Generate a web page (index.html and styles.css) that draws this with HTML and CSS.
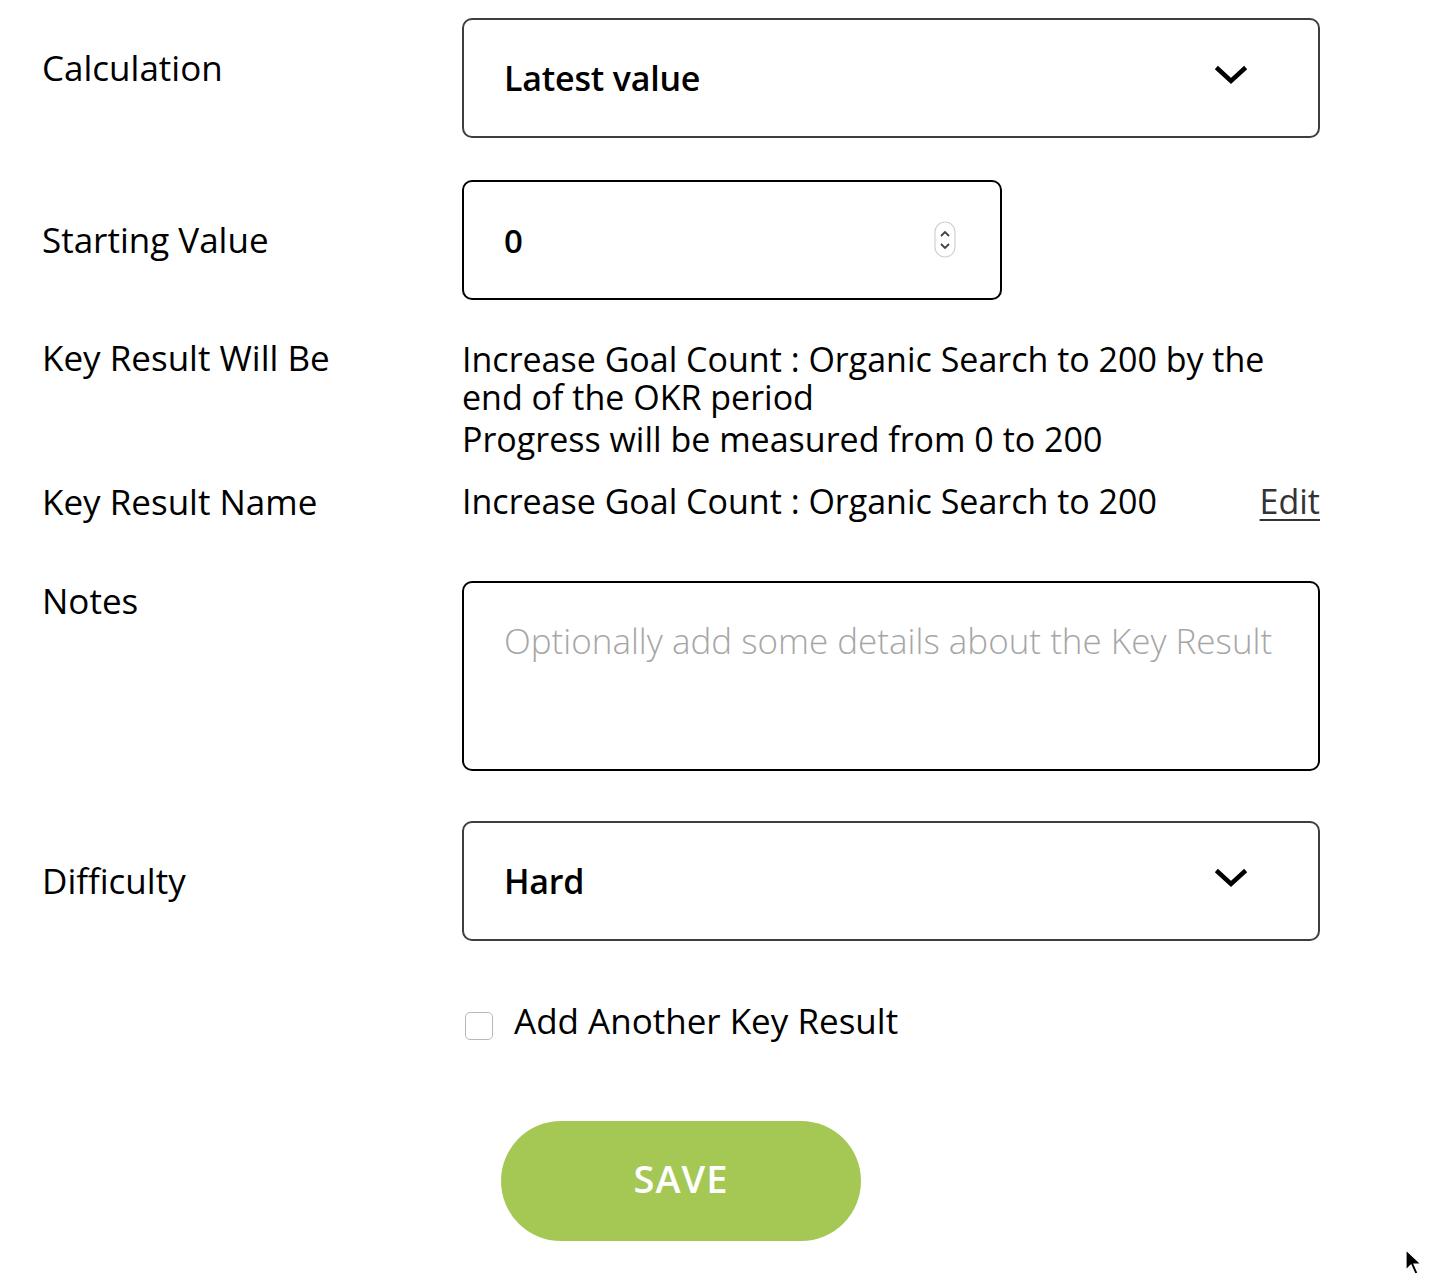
FILE: index.html
```html
<!DOCTYPE html>
<html>
<head>
<meta charset="utf-8">
<link rel="stylesheet" href="styles.css">
</head>
<body>
<form class="form">
  <div class="row row-calc">
    <div class="label">Calculation</div>
    <div class="field">
      <div class="select">
        <span class="select-text">Latest value</span>
        <svg class="chev" width="34" height="22" viewBox="0 0 34 22"><path d="M4 5 L17 17 L30 5" fill="none" stroke="#000" stroke-width="4.5" stroke-linecap="square"/></svg>
      </div>
    </div>
  </div>

  <div class="row row-start">
    <div class="label">Starting Value</div>
    <div class="field">
      <div class="number">
        <span class="number-text">0</span>
        <svg class="spin" width="22" height="37" viewBox="0 0 22 37"><rect x="1" y="1" width="20" height="35" rx="10" fill="#fff" stroke="#d0d0d0" stroke-width="1.2"/><path d="M7 15 L11 11 L15 15" fill="none" stroke="#444" stroke-width="1.8"/><path d="M7 23 L11 27 L15 23" fill="none" stroke="#444" stroke-width="1.8"/></svg>
      </div>
    </div>
  </div>

  <div class="row row-will">
    <div class="label">Key Result Will Be</div>
    <div class="field text">
      <div class="will-line">Increase Goal Count : Organic Search to 200 by the end of the OKR period</div>
      <div class="will-progress">Progress will be measured from 0 to 200</div>
    </div>
  </div>

  <div class="row row-name">
    <div class="label">Key Result Name</div>
    <div class="field text name-field">
      <span>Increase Goal Count : Organic Search to 200</span>
      <a class="edit">Edit</a>
    </div>
  </div>

  <div class="row row-notes">
    <div class="label">Notes</div>
    <div class="field">
      <textarea class="notes" placeholder="Optionally add some details about the Key Result"></textarea>
    </div>
  </div>

  <div class="row row-diff">
    <div class="label">Difficulty</div>
    <div class="field">
      <div class="select">
        <span class="select-text">Hard</span>
        <svg class="chev" width="34" height="22" viewBox="0 0 34 22"><path d="M4 5 L17 17 L30 5" fill="none" stroke="#000" stroke-width="4.5" stroke-linecap="square"/></svg>
      </div>
    </div>
  </div>

  <div class="row row-check">
    <div class="label"></div>
    <div class="field check-field">
      <span class="checkbox"></span>
      <span class="check-label">Add Another Key Result</span>
    </div>
  </div>

  <div class="row row-save">
    <div class="label"></div>
    <div class="field">
      <button type="button" class="save">SAVE</button>
    </div>
  </div>
</form>
<svg class="cursor" width="20" height="28" viewBox="0 0 20 28"><path d="M1 1 L1 21 L6 16 L10 25 L13 24 L9 15 L16 15 Z" fill="#000" stroke="#fff" stroke-width="1.2"/></svg>
</body>
</html>
```

FILE: styles.css
```css
html, body {
  margin: 0;
  padding: 0;
  background: #fff;
}
body {
  font-family: "Open Sans", "DejaVu Sans", sans-serif;
  color: #000;
  width: 1430px;
  height: 1274px;
  overflow: hidden;
  position: relative;
}
.form {
  padding: 18px 0 0 42px;
  display: flex;
  flex-direction: column;
}
.row {
  display: flex;
  align-items: flex-start;
}
.label {
  width: 420px;
  flex: none;
  font-size: 35px;
  line-height: 40px;
}
.field {
  width: 858px;
  flex: none;
}
.select {
  box-sizing: border-box;
  height: 120px;
  border: 2px solid #3e3e3e;
  border-radius: 10px;
  display: flex;
  align-items: center;
  justify-content: space-between;
  padding: 0 70px 0 40px;
}
.select-text {
  font-size: 34px;
  font-weight: 600;
  letter-spacing: -0.2px;
}
.chev {
  margin-top: -6px;
}
.row-calc .label {
  padding-top: 30px;
}
.row-start {
  margin-top: 42px;
}
.row-start .label {
  padding-top: 40px;
}
.number {
  box-sizing: border-box;
  width: 540px;
  height: 120px;
  border: 2px solid #000;
  border-radius: 10px;
  display: flex;
  align-items: center;
  justify-content: space-between;
  padding: 0 44px 0 40px;
}
.number-text {
  font-size: 33px;
  font-weight: 600;
}
.spin {
  margin-top: -2px;
}
.row-will {
  margin-top: 38px;
}
.text {
  font-size: 34px;
  line-height: 38px;
}
.will-line {
  max-width: 830px;
  padding-top: 2px;
}
.will-progress {
  margin-top: 4px;
}
.row-name {
  margin-top: 24px;
}
.name-field {
  display: flex;
  justify-content: space-between;
}
.edit {
  color: #333;
  text-decoration: underline;
  text-underline-offset: 5px;
  text-decoration-thickness: 2px;
}
.row-notes {
  margin-top: 59px;
}
.notes {
  display: block;
  box-sizing: border-box;
  width: 858px;
  height: 190px;
  border: 2px solid #000;
  border-radius: 10px;
  padding: 34px 40px;
  font-family: "Open Sans", "DejaVu Sans", sans-serif;
  font-size: 35px;
  font-weight: 300;
  resize: none;
  outline: none;
  margin: 0;
}
.notes::placeholder {
  color: #a6a6a6;
}
.row-diff {
  margin-top: 50px;
}
.row-diff .label {
  padding-top: 40px;
}
.row-check {
  margin-top: 60px;
}
.check-field {
  display: flex;
  align-items: center;
}
.checkbox {
  box-sizing: border-box;
  width: 28px;
  height: 28px;
  margin: 10px 0 0 3px;
  border: 1.5px solid #b8b8b8;
  border-radius: 5px;
  background: #fff;
}
.check-label {
  margin-left: 21px;
  font-size: 35px;
  line-height: 40px;
}
.row-save {
  margin-top: 80px;
}
.save {
  margin-left: 39px;
  width: 360px;
  height: 120px;
  border: none;
  border-radius: 60px;
  background: #a5c855;
  color: #fff;
  font-family: "Open Sans", "DejaVu Sans", sans-serif;
  font-size: 38px;
  font-weight: 600;
  letter-spacing: 1px;
  padding: 0 0 7px 0;
}
.cursor {
  position: absolute;
  left: 1405px;
  top: 1249px;
}
```
